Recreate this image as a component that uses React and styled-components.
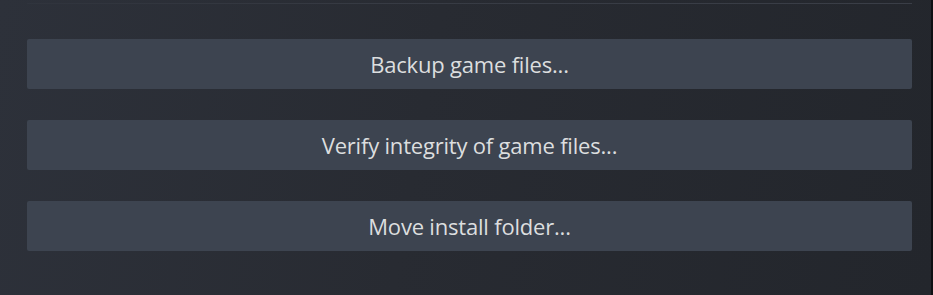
import { styled, createGlobalStyle } from 'styled-components';
import React from 'react';

const GlobalStyle = createGlobalStyle`
  html, body {
    margin: 0;
    padding: 0;
    background: #25282e;
  }
`;

const Panel = styled.div`
  width: 933px;
  height: 295px;
  box-sizing: border-box;
  padding: 3px 19px 0 27px;
  background: linear-gradient(100deg, #2d313a 0%, #282b32 45%, #23262c 100%);
  border-right: 2px solid #0f1013;
  font-family: 'Open Sans', 'Liberation Sans', sans-serif;
`;

const Divider = styled.div`
  height: 1px;
  background: linear-gradient(90deg, rgba(61, 66, 76, 0.2) 0%, #373b44 40%, #3a3e47 100%);
`;

const ButtonList = styled.div`
  display: flex;
  flex-direction: column;
  gap: 31px;
  margin-top: 35px;
`;

const ActionButton = styled.button`
  display: flex;
  align-items: center;
  justify-content: center;
  height: 50px;
  border: none;
  border-radius: 2px;
  background: #3d4450;
  color: #dcdedf;
  font-family: inherit;
  font-size: 22px;
  letter-spacing: -0.2px;
  cursor: pointer;
  padding: 0 0 1px;
`;

const actions = [
  'Backup game files...',
  'Verify integrity of game files...',
  'Move install folder...',
];

function App() {
  return (
    <>
      <GlobalStyle />
      <Panel>
        <Divider />
        <ButtonList>
          {actions.map((label) => (
            <ActionButton key={label}>{label}</ActionButton>
          ))}
        </ButtonList>
      </Panel>
    </>
  );
}

export default App;
